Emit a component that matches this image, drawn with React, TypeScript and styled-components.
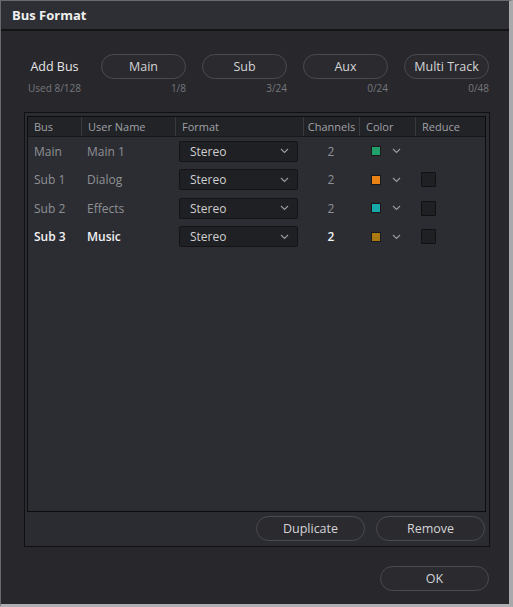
import React from "react";
import styled, { createGlobalStyle } from "styled-components";

const Global = createGlobalStyle`
  html, body { margin: 0; padding: 0; background: #28282c; }
  body { font-family: "Open Sans", "Noto Sans", sans-serif; }
`;

const Window = styled.div`
  width: 513px;
  height: 607px;
  box-sizing: border-box;
  background: #28282c;
  border-top: 1px solid #6a6a6e;
  border-left: 1px solid #6a6a6e;
  border-right: 4px solid #a9a9ab;
  border-bottom: 3px solid #b0b0b2;
  display: flex;
  flex-direction: column;
  color: #d0d0d2;
`;

const TitleBar = styled.div`
  height: 28px;
  flex-shrink: 0;
  background: #2e2f35;
  border-bottom: 2px solid #141416;
  display: flex;
  align-items: center;
  padding-left: 11px;
  font-size: 13px;
  font-weight: 700;
  color: #f0f0f0;
`;

const Body = styled.div`
  flex: 1;
  display: flex;
  flex-direction: column;
  padding: 23px 20px 0 23px;
`;

const AddGrid = styled.div`
  display: grid;
  grid-template-columns: 61px repeat(4, 85px);
  column-gap: 16px;
  row-gap: 2px;
  align-items: center;
`;

const AddLabel = styled.div`
  text-align: center;
  font-size: 12.5px;
  color: #e6e6e8;
`;

const Pill = styled.button<{ $w?: number }>`
  height: 25px;
  width: ${({ $w }) => ($w ? `${$w}px` : "100%")};
  border-radius: 13px;
  border: 1px solid #4a4b50;
  background: #2a2a2f;
  color: #d4d4d6;
  font-family: inherit;
  font-size: 12.5px;
  padding: 0;
  cursor: pointer;
`;

const Count = styled.div<{ $left?: boolean }>`
  font-size: 10px;
  color: #76777c;
  text-align: ${({ $left }) => ($left ? "center" : "right")};
  line-height: 14px;
`;

const Panel = styled.div`
  margin-top: 17px;
  width: 466px;
  height: 435px;
  box-sizing: border-box;
  background: #2b2c31;
  border: 1px solid #101012;
  padding: 3px 3px 5px 2px;
  display: flex;
  flex-direction: column;
  gap: 4px;
`;

const Table = styled.div`
  flex: 1;
  border: 1px solid #0c0c0e;
  background: #2c2d32;
  display: flex;
  flex-direction: column;
`;

const cols = "53px 94px 128px 56px 56px 1fr";

const HeadRow = styled.div`
  display: grid;
  grid-template-columns: ${cols};
  height: 19px;
  background: #222327;
  border-bottom: 1px solid #18181b;
`;

const HeadCell = styled.div<{ $center?: boolean }>`
  font-size: 11px;
  color: #a0a1a6;
  display: flex;
  align-items: center;
  justify-content: ${({ $center }) => ($center ? "center" : "flex-start")};
  padding-left: ${({ $center }) => ($center ? "0" : "6px")};
  border-left: 1px solid #38393e;
  &:first-child { border-left: none; }
`;

const Row = styled.div`
  display: grid;
  grid-template-columns: ${cols};
  height: 28.5px;
  align-items: center;
`;

const Cell = styled.div<{ $active?: boolean; $center?: boolean }>`
  font-size: 12px;
  color: ${({ $active }) => ($active ? "#f2f2f2" : "#8f9095")};
  font-weight: ${({ $active }) => ($active ? 600 : 400)};
  padding-left: ${({ $center }) => ($center ? "0" : "6px")};
  display: flex;
  align-items: center;
  justify-content: ${({ $center }) => ($center ? "center" : "flex-start")};
`;

const SelectCell = styled.div`
  display: flex;
  align-items: center;
  padding-left: 4px;
`;

const Select = styled.div`
  width: 119px;
  height: 21px;
  box-sizing: border-box;
  background: #1f2023;
  border: 1px solid #141416;
  border-radius: 2px;
  display: flex;
  align-items: center;
  justify-content: space-between;
  padding: 0 8px 0 10px;
  font-size: 12px;
  color: #cfcfd1;
`;

const ColorCell = styled.div`
  display: flex;
  align-items: center;
  gap: 12px;
  padding-left: 13px;
`;

const Swatch = styled.span<{ $c: string }>`
  display: block;
  width: 8px;
  height: 8px;
  background: ${({ $c }) => $c};
  box-shadow: 0 0 0 1px #1a1a1c;
`;

const CheckCell = styled.div`
  display: flex;
  align-items: center;
  padding-left: 6px;
`;

const Check = styled.span`
  display: block;
  width: 13px;
  height: 13px;
  background: #1f2023;
  border: 1px solid #101012;
  border-radius: 1px;
`;

const PanelFooter = styled.div`
  display: flex;
  justify-content: flex-end;
  gap: 11px;
  padding-right: 1px;
`;

const Footer = styled.div`
  display: flex;
  justify-content: flex-end;
  padding: 19px 0 0 0;
`;

const Chevron = () => (
  <svg width="9" height="6" viewBox="0 0 9 6">
    <path d="M1 1 L4.5 4.5 L8 1" fill="none" stroke="#9a9ba0" strokeWidth="1.1" />
  </svg>
);

const rows = [
  { bus: "Main", name: "Main 1", color: "#22a06b", reduce: false },
  { bus: "Sub 1", name: "Dialog", color: "#ea8214", reduce: true },
  { bus: "Sub 2", name: "Effects", color: "#16a8ab", reduce: true },
  { bus: "Sub 3", name: "Music", color: "#a87a10", reduce: true, active: true },
];

export default function App() {
  return (
    <>
      <Global />
      <Window>
        <TitleBar>Bus Format</TitleBar>
        <Body>
          <AddGrid>
            <AddLabel>Add Bus</AddLabel>
            <Pill>Main</Pill>
            <Pill>Sub</Pill>
            <Pill>Aux</Pill>
            <Pill>Multi Track</Pill>
            <Count $left>Used 8/128</Count>
            <Count>1/8</Count>
            <Count>3/24</Count>
            <Count>0/24</Count>
            <Count>0/48</Count>
          </AddGrid>
          <Panel>
            <Table>
              <HeadRow>
                <HeadCell>Bus</HeadCell>
                <HeadCell>User Name</HeadCell>
                <HeadCell>Format</HeadCell>
                <HeadCell $center>Channels</HeadCell>
                <HeadCell>Color</HeadCell>
                <HeadCell>Reduce</HeadCell>
              </HeadRow>
              {rows.map((r) => (
                <Row key={r.bus}>
                  <Cell $active={r.active}>{r.bus}</Cell>
                  <Cell $active={r.active}>{r.name}</Cell>
                  <SelectCell>
                    <Select>
                      Stereo
                      <Chevron />
                    </Select>
                  </SelectCell>
                  <Cell $active={r.active} $center>2</Cell>
                  <ColorCell>
                    <Swatch $c={r.color} />
                    <Chevron />
                  </ColorCell>
                  <CheckCell>{r.reduce && <Check />}</CheckCell>
                </Row>
              ))}
            </Table>
            <PanelFooter>
              <Pill $w={109}>Duplicate</Pill>
              <Pill $w={109}>Remove</Pill>
            </PanelFooter>
          </Panel>
          <Footer>
            <Pill $w={109}>OK</Pill>
          </Footer>
        </Body>
      </Window>
    </>
  );
}
